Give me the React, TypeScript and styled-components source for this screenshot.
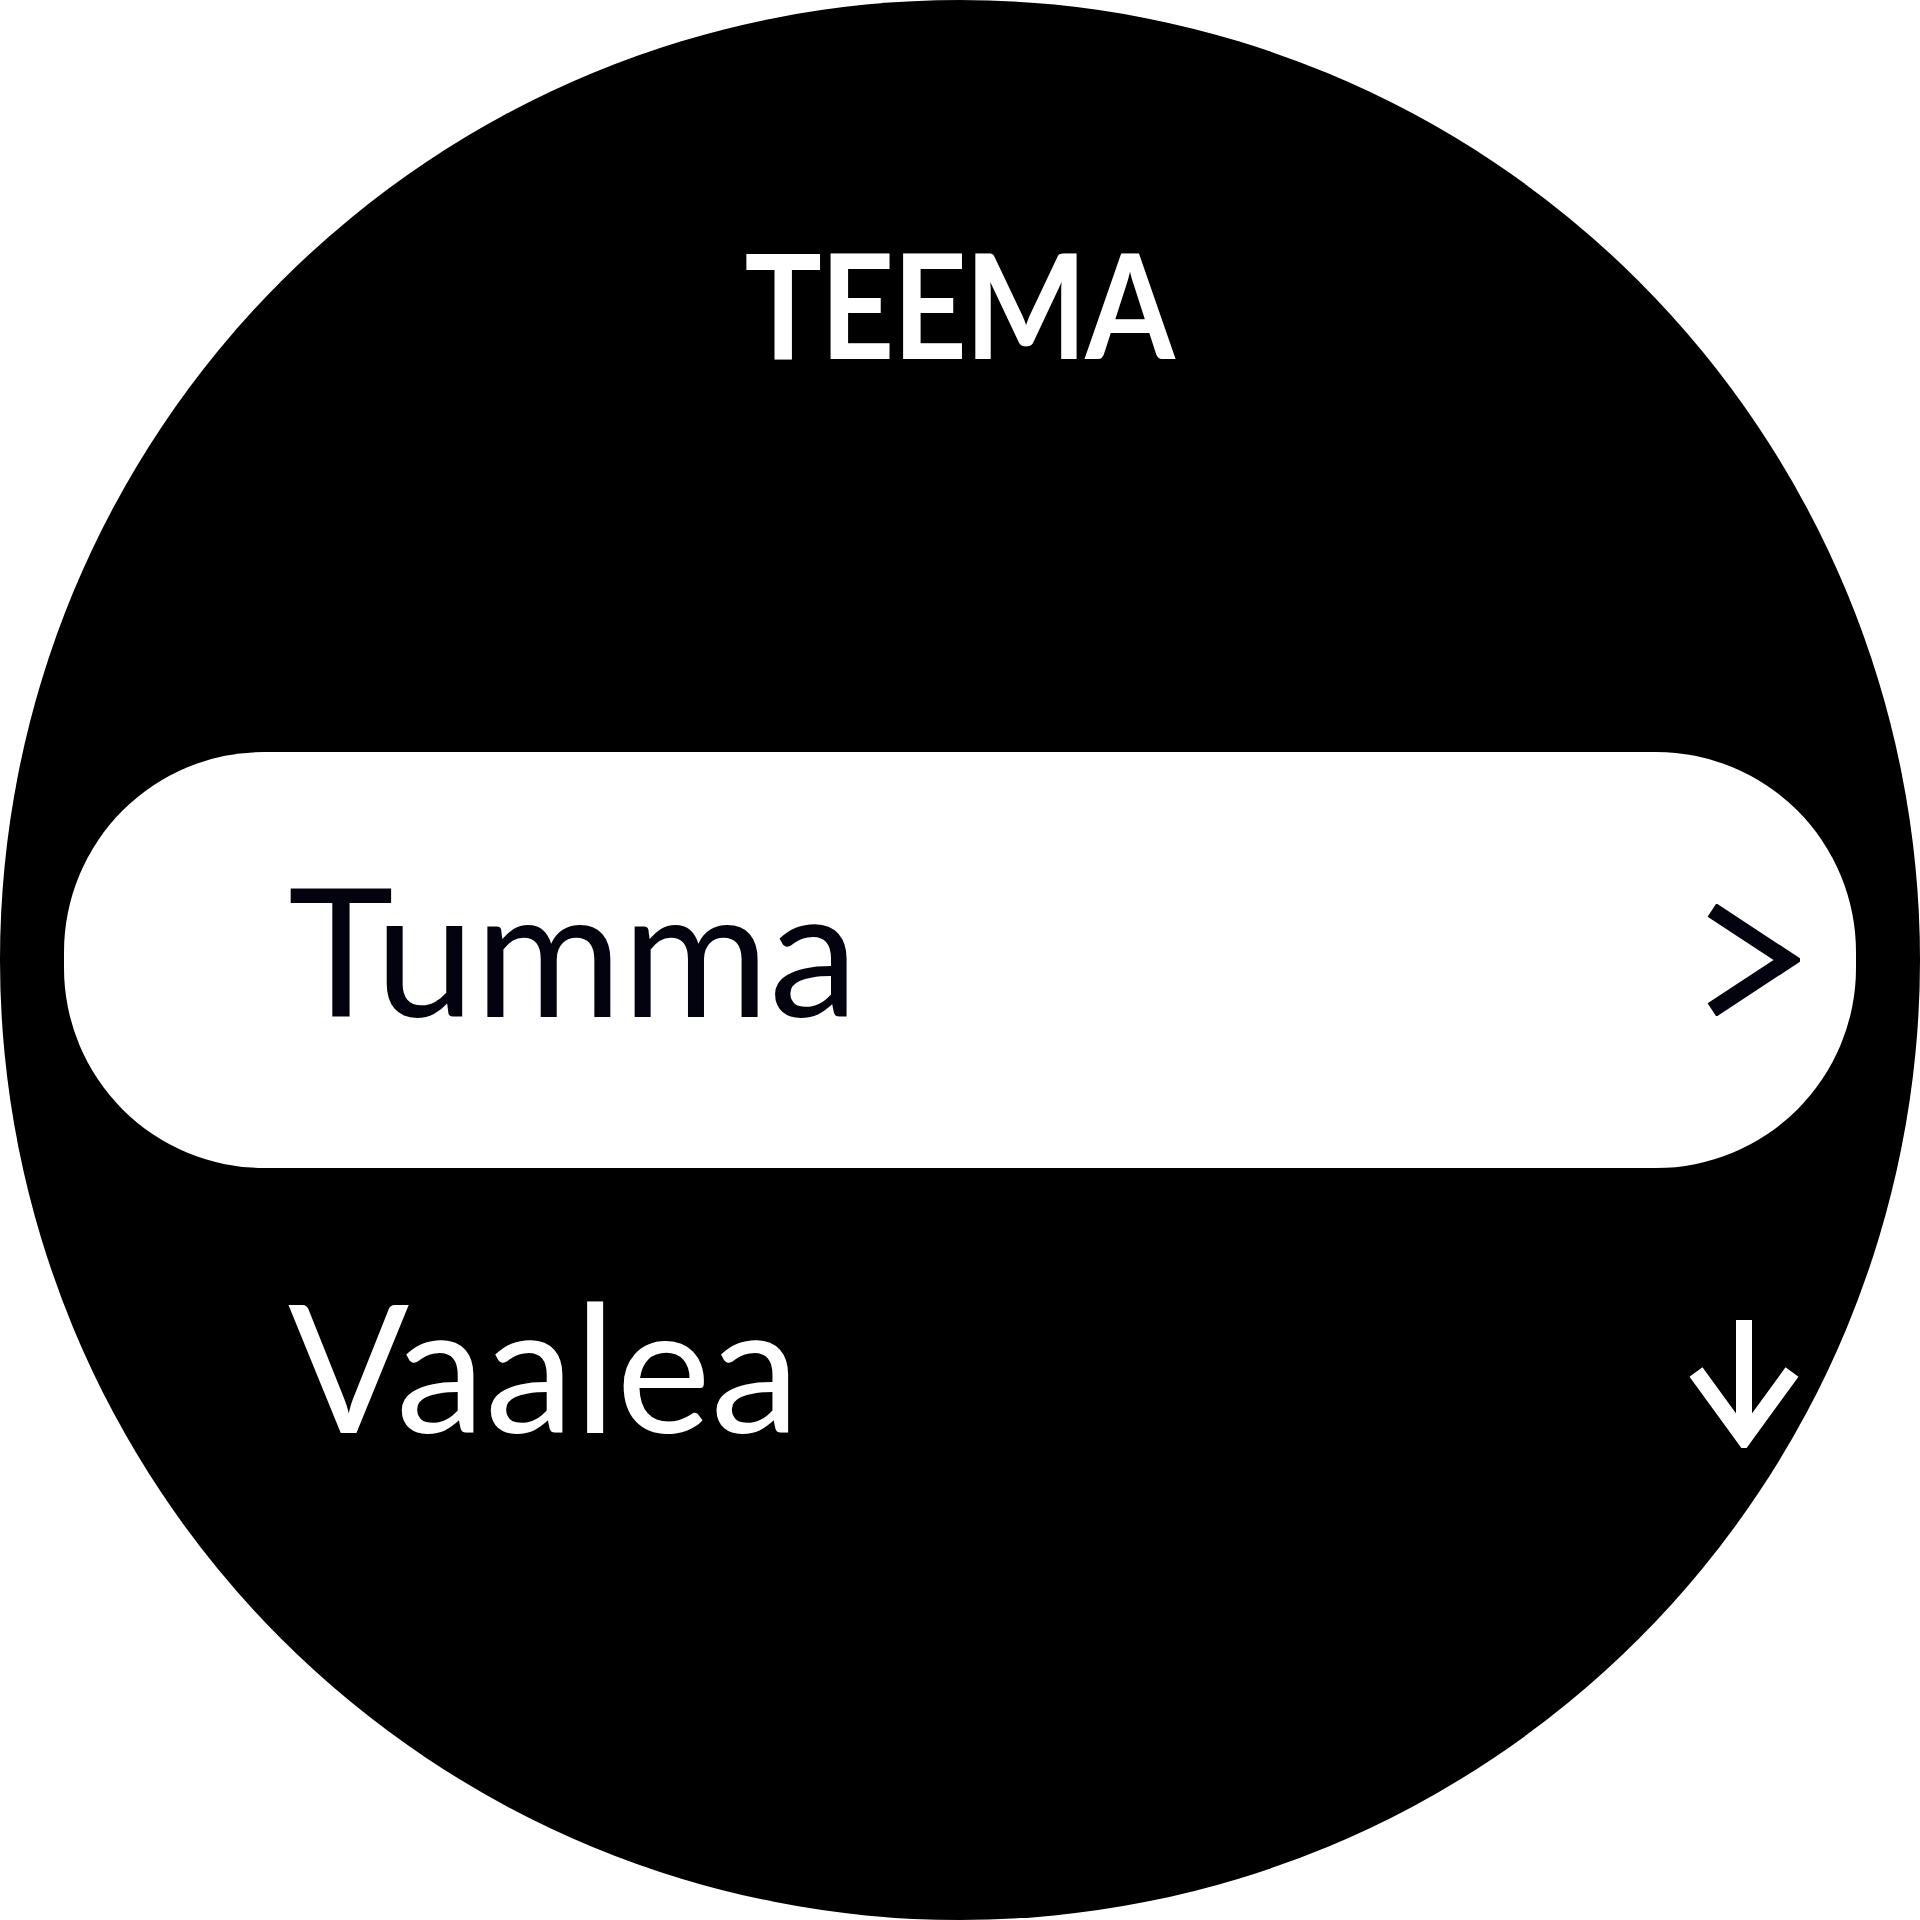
import React from 'react';
import styled, { createGlobalStyle } from 'styled-components';

const GlobalStyle = createGlobalStyle`
  html, body {
    margin: 0;
    padding: 0;
    background: #ffffff;
  }
`;

interface ThemeOption {
  id: string;
  label: string;
  selected: boolean;
}

const OPTIONS: ThemeOption[] = [
  { id: 'dark', label: 'Tumma', selected: true },
  { id: 'light', label: 'Vaalea', selected: false },
];

const ChevronRight = () => (
  <svg width="112" height="112" viewBox="0 0 112 112" fill="none">
    <path d="M24 6 L100 56 L24 106" stroke="#03030f" strokeWidth="16" strokeLinejoin="miter" />
  </svg>
);

const ArrowDown = () => (
  <svg width="112" height="144" viewBox="0 0 112 144" fill="none">
    <path d="M56 16 V136" stroke="#ffffff" strokeWidth="16" />
    <path d="M8 68 L56 134 L104 68" stroke="#ffffff" strokeWidth="16" strokeLinejoin="miter" />
  </svg>
);

const App: React.FC = () => {
  return (
    <>
      <GlobalStyle />
      <Screen>
        <Title>TEEMA</Title>
        <List>
          {OPTIONS.map((option) => (
            <Row key={option.id} selected={option.selected}>
              <Label selected={option.selected}>{option.label}</Label>
              <IconBox>{option.selected ? <ChevronRight /> : <ArrowDown />}</IconBox>
            </Row>
          ))}
        </List>
      </Screen>
    </>
  );
};

export default App;

const Screen = styled.div`
  width: 1920px;
  height: 1920px;
  border-radius: 50%;
  background: #000000;
  overflow: hidden;
  display: flex;
  flex-direction: column;
  align-items: center;
`;

const Title = styled.div`
  margin-top: 231px;
  font-family: Lato, 'Liberation Sans', sans-serif;
  font-weight: 700;
  font-size: 145px;
  line-height: 145px;
  color: #ffffff;
  letter-spacing: -2px;
  padding-right: 2px;
  transform: scaleX(0.89);
`;

const List = styled.div`
  width: 1792px;
  margin-top: 376px;
  display: flex;
  flex-direction: column;
`;

const Row = styled.div<{ selected: boolean }>`
  height: 416px;
  display: flex;
  align-items: center;
  justify-content: space-between;
  padding: 0 56px 0 224px;
  box-sizing: border-box;
  border-radius: 200px;
  background: ${({ selected }) => (selected ? '#ffffff' : 'transparent')};
`;

const Label = styled.span<{ selected: boolean }>`
  font-family: Lato, 'Liberation Sans', sans-serif;
  font-weight: 400;
  font-size: 179px;
  line-height: 179px;
  padding-bottom: 26px;
  color: ${({ selected }) => (selected ? '#03030f' : '#ffffff')};
`;

const IconBox = styled.div`
  width: 112px;
  display: flex;
  align-items: center;
  justify-content: center;
`;
